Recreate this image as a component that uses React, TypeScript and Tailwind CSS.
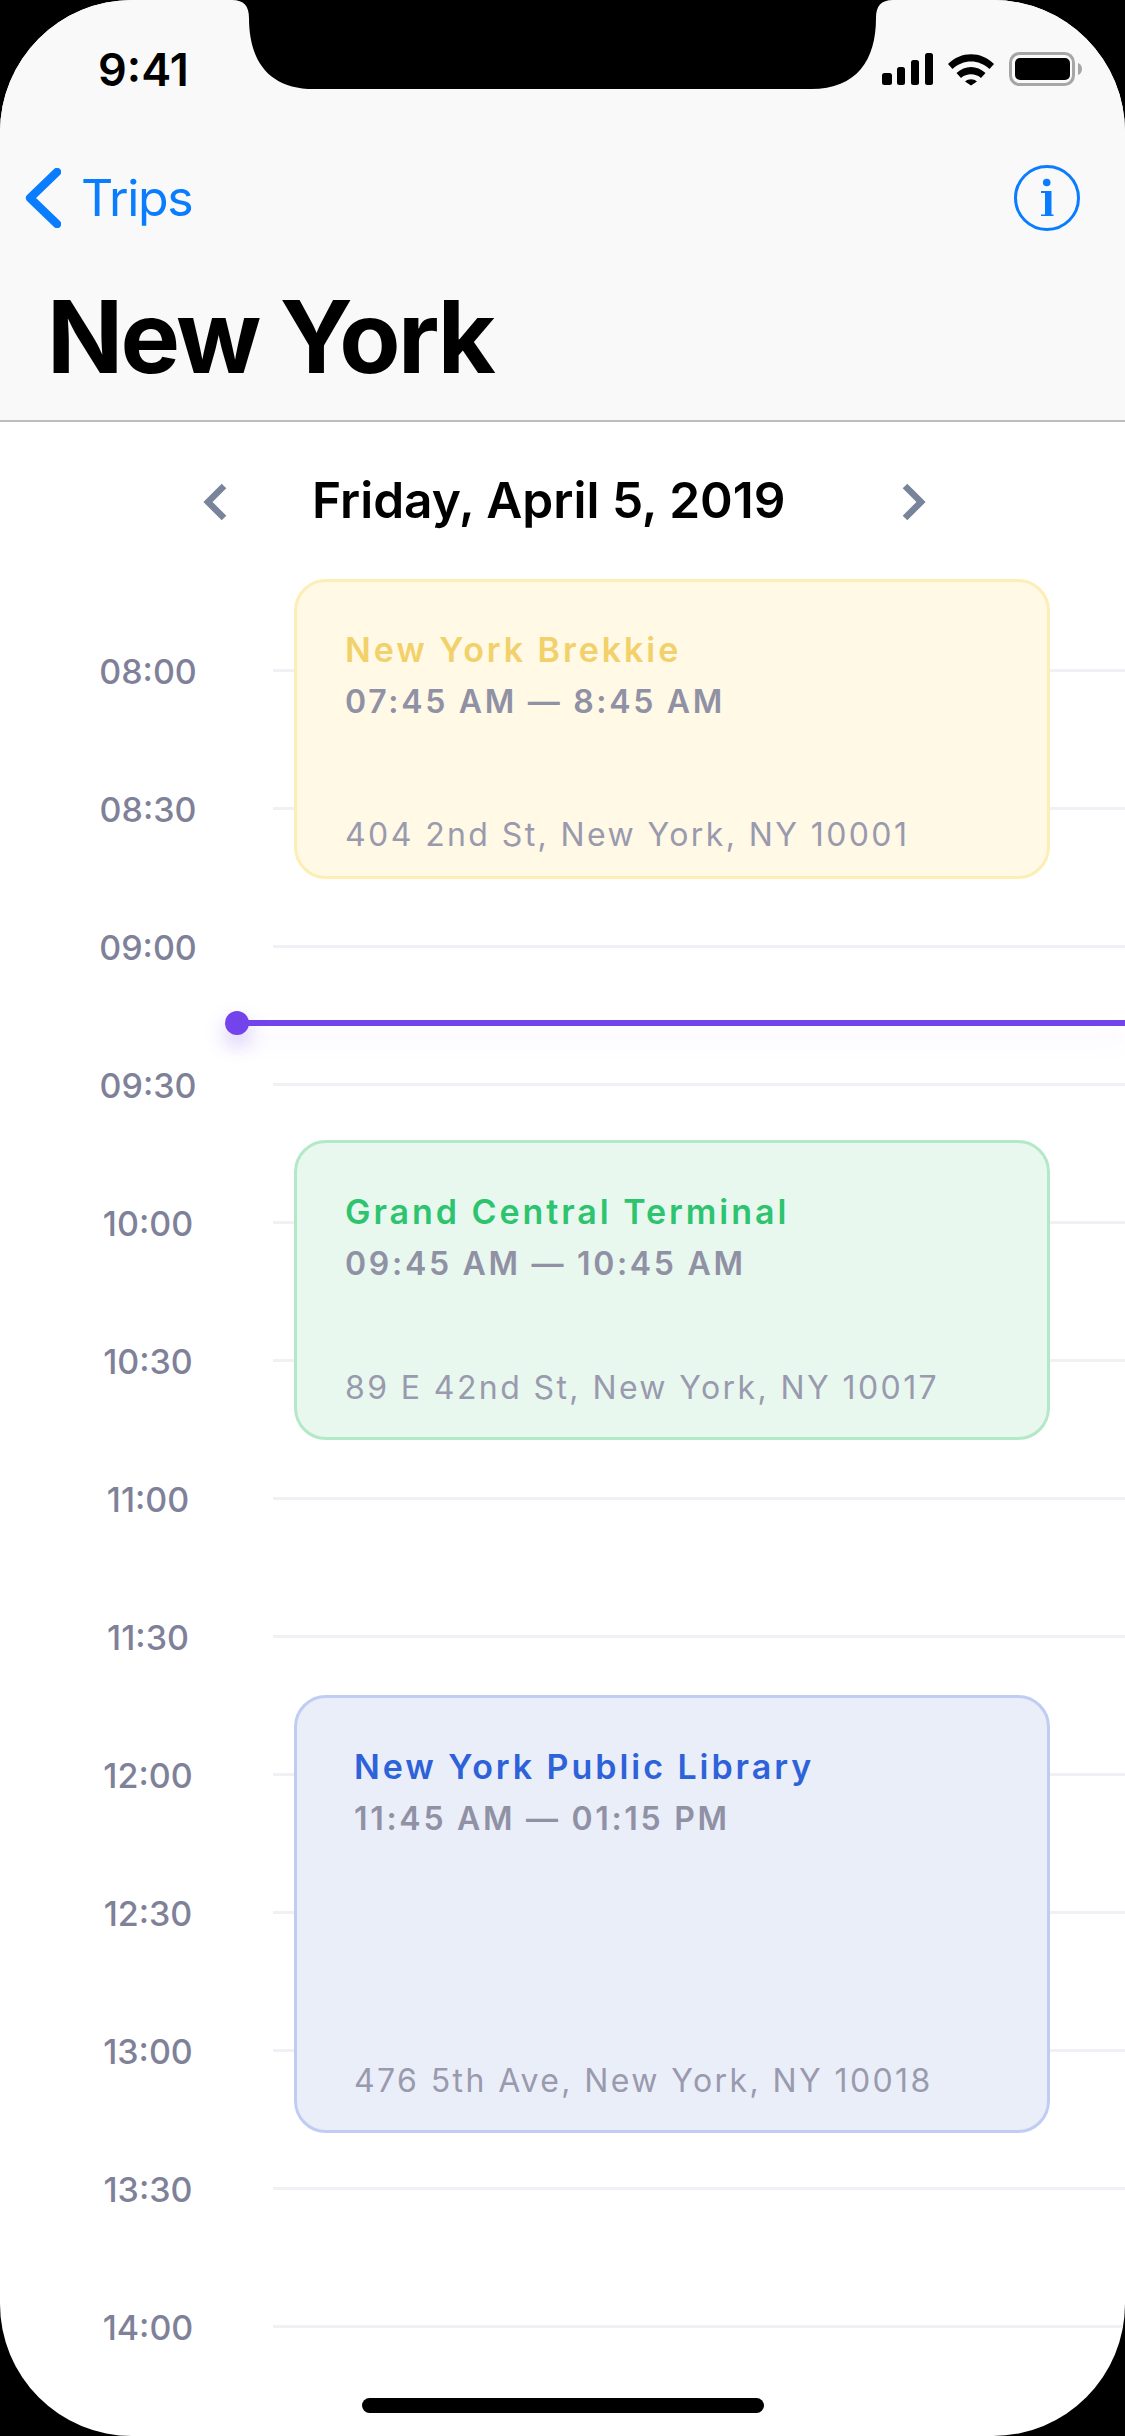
const times = [
  '08:00', '08:30', '09:00', '09:30', '10:00', '10:30', '11:00',
  '11:30', '12:00', '12:30', '13:00', '13:30', '14:00',
];

function StatusIcons() {
  return (
    <svg width="205" height="40" viewBox="0 0 205 40" className="mt-[6px] block">
      <rect x="5" y="21" width="10" height="12" rx="2.5" fill="#000" />
      <rect x="20" y="15" width="8" height="18" rx="2.5" fill="#000" />
      <rect x="34" y="8" width="8" height="25" rx="2.5" fill="#000" />
      <rect x="48" y="1" width="8" height="32" rx="2.5" fill="#000" />
      <path
        d="M71 12 C84 -1 104 -1 117 12 L112.5 17 C102 7 86 7 75.500 17 Z M79.500 21 C88 13 100 13 108.500 21 L104 26 C98.500 21 89.500 21 84 26 Z M88 29.500 C91.500 26.500 96.500 26.500 100 29.500 L94 33.500 Z"
        fill="#000"
      />
      <rect x="133.500" y="1.500" width="63" height="31" rx="9" fill="none" stroke="#a6a6a6" strokeWidth="3" />
      <rect x="138" y="6" width="55" height="22" rx="5" fill="#000" />
      <path d="M201 11 C204 12 205 14.500 205 17 C205 19.500 204 22 201 23 Z" fill="#a6a6a6" />
    </svg>
  );
}

function Notch() {
  return (
    <svg
      width="661"
      height="89"
      viewBox="0 0 661 89"
      className="absolute left-[232px] top-0"
    >
      <path
        d="M0 0 C12 0 17 6 17 18 C17 60 36 89 82 89 L579 89 C625 89 644 60 644 18 C644 6 649 0 661 0 Z"
        fill="#000"
      />
    </svg>
  );
}

function Event({
  title,
  time,
  address,
  className,
  titleClass,
}: {
  title: string;
  time: string;
  address: string;
  className: string;
  titleClass: string;
}) {
  return (
    <div className={`absolute left-[294px] flex w-[756px] flex-col justify-between rounded-[32px] border-[3px] ${className}`}>
      <div>
        <div className={`text-[34px] font-semibold leading-[40px] tracking-[2.95px] ${titleClass}`}>{title}</div>
        <div className="mt-[12px] text-[32px] font-semibold leading-[40px] tracking-[2.7px] text-[#9091a5]">{time}</div>
      </div>
      <div className="text-[32px] leading-[40px] tracking-[2.4px] text-[#9a9aae]">{address}</div>
    </div>
  );
}

export default function App() {
  return (
    <div className="h-[2436px] w-[1125px] bg-black" style={{ fontFamily: 'Inter, sans-serif' }}>
      <div className="relative flex h-full flex-col overflow-hidden rounded-[132px] bg-white">
        <header className="h-[422px] border-b-2 border-[#bdbdbd] bg-[#f9f9f9]">
          <div className="flex h-[138px] items-center justify-between pr-[43px] pl-[98px]">
            <span className="text-[45px] leading-none font-semibold text-black">9:41</span>
            <StatusIcons />
          </div>
          <div className="flex h-[120px] items-center justify-between pr-[44px] pl-[25px]">
            <div className="flex items-center gap-[20px]">
              <svg width="36" height="60" viewBox="0 0 36 60" className="block">
                <path d="M32 4 L5 30 L32 56" fill="none" stroke="#0a7dff" strokeWidth="8.500" strokeLinecap="round" strokeLinejoin="round" />
              </svg>
              <span className="text-[50px] leading-none tracking-[-1.4px] text-[#0a7dff]">Trips</span>
            </div>
            <svg width="68" height="68" viewBox="0 0 68 68" className="block">
              <circle cx="34" cy="34" r="31.500" fill="none" stroke="#0a7dff" strokeWidth="3" />
              <circle cx="33.700" cy="18.500" r="3.800" fill="#0a7dff" />
              <path d="M28 27 H38.500 V50.500 H40.500 V52 H28 V50.500 H32 V29 H28 Z" fill="#0a7dff" />
            </svg>
          </div>
          <h1 className="pt-[24px] pl-[47px] text-[100px] leading-[110px] font-bold tracking-[-2.6px] text-black">New York</h1>
        </header>

        <div className="flex h-[158px] items-center pl-[202px]">
          <svg width="26" height="38" viewBox="0 0 26 38" className="mt-[2px] block">
            <path d="M22 3 L6 19 L22 35" fill="none" stroke="#778499" strokeWidth="6.500" />
          </svg>
          <span className="ml-[84px] w-[473px] text-[49.600px] leading-none font-semibold whitespace-nowrap text-black">Friday, April 5, 2019</span>
          <svg width="26" height="38" viewBox="0 0 26 38" className="mt-[2px] ml-[116px] block">
            <path d="M4 3 L20 19 L4 35" fill="none" stroke="#778499" strokeWidth="6.500" />
          </svg>
        </div>

        <div className="relative mt-[21px]">
          {times.map((t) => (
            <div key={t} className="flex h-[138px] items-center">
              <span className="mt-[3px] ml-[98px] w-[100px] text-center text-[34px] leading-none font-medium text-[#7f8199]">{t}</span>
              <div className="ml-[75px] h-[3px] flex-1 bg-[#f0f0f5]" />
            </div>
          ))}

          <Event
            title="New York Brekkie"
            time="07:45 AM — 8:45 AM"
            address="404 2nd St, New York, NY 10001"
            className="top-[-22px] h-[300px] border-[#fdeeb5] bg-[#fff9e6] pt-[48px] pr-[20px] pb-[21px] pl-[48px]"
            titleClass="text-[#f2d16b]"
          />
          <Event
            title="Grand Central Terminal"
            time="09:45 AM — 10:45 AM"
            address="89 E 42nd St, New York, NY 10017"
            className="top-[539px] h-[300px] border-[#b3e8c9] bg-[#e8f8ee] pt-[49px] pr-[20px] pb-[29px] pl-[48px]"
            titleClass="text-[#2ec46f]"
          />
          <Event
            title="New York Public Library"
            time="11:45 AM — 01:15 PM"
            address="476 5th Ave, New York, NY 10018"
            className="top-[1094px] h-[438px] border-[#bfcdf2] bg-[#eaeef9] pt-[49px] pr-[20px] pb-[29px] pl-[57px]"
            titleClass="text-[#2e62d9]"
          />

          <div className="absolute top-[419px] right-0 left-[237px] h-[6px] bg-[#7344ec] shadow-[0_14px_24px_rgba(115,68,236,0.1)]">
            <div className="absolute top-[-9px] left-[-12px] h-[24px] w-[24px] rounded-full bg-[#7344ec] shadow-[0_10px_20px_rgba(115,68,236,0.3)]" />
          </div>
        </div>

        <Notch />
        <div className="absolute bottom-[23px] left-[362px] h-[15px] w-[402px] rounded-full bg-black" />
      </div>
    </div>
  );
}
